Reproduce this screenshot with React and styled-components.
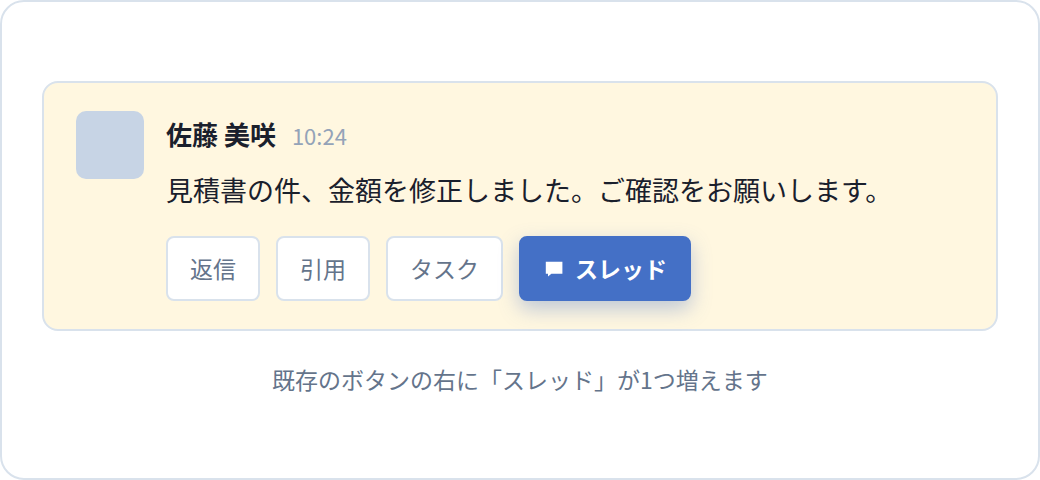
import React from 'react';
import styled, { createGlobalStyle } from 'styled-components';

const GlobalStyle = createGlobalStyle`
  * {
    box-sizing: border-box;
  }

  body {
    margin: 0;
    background: #ffffff;
    color: #1a202c;
    font-family: 'Noto Sans CJK JP', sans-serif;
  }
`

const Frame = styled.main`
  min-height: 100vh;
  padding: 40px;
  display: flex;
  flex-direction: column;
  justify-content: center;
  border: 2px solid #d9e2ec;
  border-radius: 24px;
  background: #ffffff;
`

const Message = styled.article`
  display: flex;
  align-items: flex-start;
  gap: 22px;
  padding: 28px 32px;
  border: 2px solid #d9e2ec;
  border-radius: 16px;
  background: #fff7e0;
`

const Avatar = styled.div`
  flex: none;
  width: 68px;
  height: 68px;
  border-radius: 10px;
  background: #c7d4e5;
`

const Content = styled.div`
  flex: 1;
  min-width: 0;
`

const Meta = styled.header`
  display: flex;
  align-items: baseline;
  gap: 16px;
  line-height: 46px;
`

const Name = styled.strong`
  font-size: 26px;
  font-weight: 700;
`

const Time = styled.time`
  color: #94a3b8;
  font-size: 22px;
`

const Body = styled.p`
  margin: 8px 0 22px;
  font-size: 27px;
  line-height: 48px;
`

const Actions = styled.div`
  display: flex;
  flex-wrap: wrap;
  gap: 16px;
`

const ActionButton = styled.button`
  display: inline-flex;
  align-items: center;
  gap: 10px;
  padding: 14px 22px;
  border: 2px solid ${({ $primary }) => ($primary ? '#4470c6' : '#d9e2ec')};
  border-radius: 8px;
  background: ${({ $primary }) => ($primary ? '#4470c6' : '#ffffff')};
  box-shadow: ${({ $primary }) => ($primary ? '0 8px 20px rgba(68, 112, 198, 0.35)' : 'none')};
  color: ${({ $primary }) => ($primary ? '#ffffff' : '#64748b')};
  font-family: inherit;
  font-size: 23px;
  font-weight: ${({ $primary }) => ($primary ? 700 : 400)};
  line-height: 33px;
  cursor: pointer;
`

const Caption = styled.p`
  margin: 28px 0 0;
  color: #64748b;
  font-size: 23px;
  line-height: 40px;
  text-align: center;
`

const actions = ['返信', '引用', 'タスク'];

const ThreadIcon = () => (
  <svg width="22" height="22" viewBox="0 0 22 22" fill="currentColor" aria-hidden="true">
    <path d="M2.8 3.8h16.6v11.9H8.4L5 18.6V15.7H2.8z" />
  </svg>
);

const App = () => {
  return (
    <>
      <GlobalStyle />
      <Frame lang="ja">
        <Message>
          <Avatar />
          <Content>
            <Meta>
              <Name>佐藤 美咲</Name>
              <Time dateTime="10:24">10:24</Time>
            </Meta>
            <Body>見積書の件、金額を修正しました。ご確認をお願いします。</Body>
            <Actions>
              {actions.map((label) => (
                <ActionButton key={label} type="button">{label}</ActionButton>
              ))}
              <ActionButton type="button" $primary>
                <ThreadIcon />
                スレッド
              </ActionButton>
            </Actions>
          </Content>
        </Message>
        <Caption>既存のボタンの右に「スレッド」が1つ増えます</Caption>
      </Frame>
    </>
  );
};

export default App;
